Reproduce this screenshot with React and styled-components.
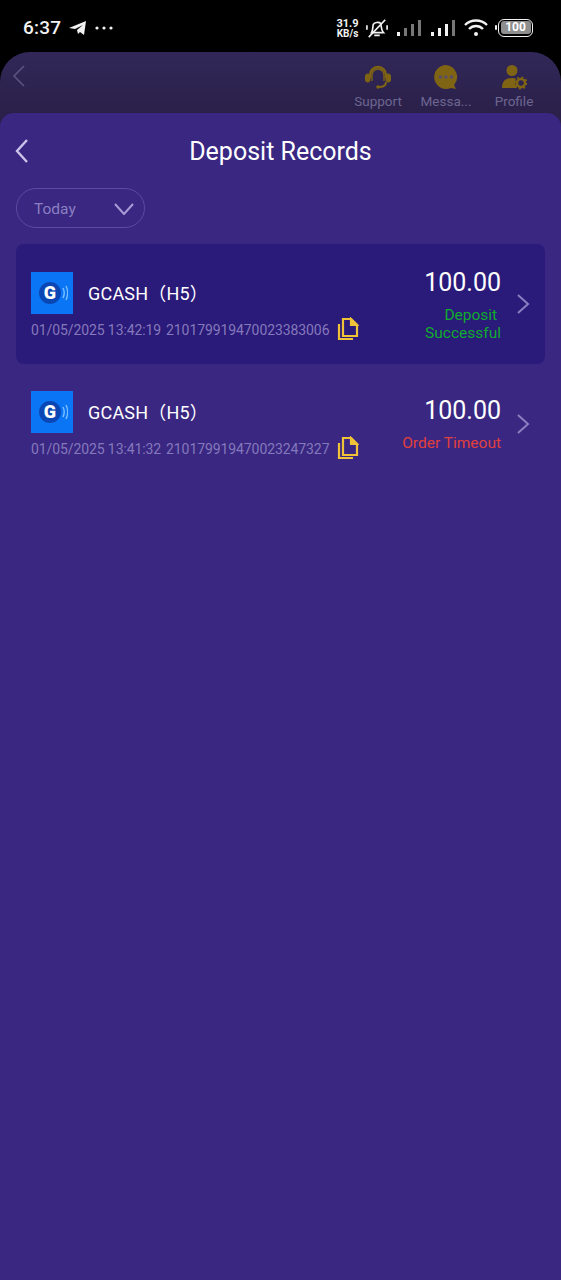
import React from 'react';
import styled, { createGlobalStyle } from 'styled-components';

const GlobalStyle = createGlobalStyle`
  html, body { margin: 0; padding: 0; background: #000; }
  body { font-family: Roboto, "Liberation Sans", sans-serif; }
  * { box-sizing: border-box; }
`;

const Phone = styled.div`
  width: 561px;
  height: 1280px;
  display: flex;
  flex-direction: column;
  background: #000;
  overflow: hidden;
`;

const StatusBar = styled.div`
  height: 52px;
  flex: none;
  display: flex;
  align-items: center;
  justify-content: space-between;
  padding: 3px 28px 0 23px;
  color: #f2f2f2;
`;

const StatusGroup = styled.div`
  display: flex;
  align-items: center;
  gap: ${p => p.$gap || 0}px;
`;

const Clock = styled.span`
  font-size: 19px;
  font-weight: 500;
  letter-spacing: 0.2px;
`;

const Speed = styled.div`
  display: flex;
  flex-direction: column;
  align-items: center;
  font-size: 10px;
  font-weight: 700;
  line-height: 9px;
  width: 23px;
  margin-right: -1px;
  span:first-child { font-size: 11px; line-height: 11px; }
`;

const Battery = styled.div`
  width: 35px;
  height: 18px;
  border: 1.5px solid #f2f2f2;
  border-radius: 6px;
  padding: 1.5px;
  display: flex;
  margin-left: 2px;
  position: relative;
  &::before {
    content: '';
    position: absolute;
    left: -4px;
    top: 5px;
    width: 2px;
    height: 5px;
    background: #f2f2f2;
    border-radius: 1px;
  }
`;

const BatteryFill = styled.div`
  flex: 1;
  background: #8e8e8e;
  border-radius: 3px;
  color: #fff;
  font-size: 12px;
  font-weight: 700;
  line-height: 12px;
  text-align: center;
`;

const DimPanel = styled.div`
  flex: 1;
  display: flex;
  flex-direction: column;
  background: linear-gradient(#312859, #2a2049 60px);
  border-radius: 30px 30px 0 0;
`;

const DimHeader = styled.div`
  height: 61px;
  flex: none;
  display: flex;
  justify-content: space-between;
  padding: 12px 0 0 12px;
`;

const DimNav = styled.div`
  display: flex;
  padding-right: 13px;
`;

const DimNavItem = styled.div`
  width: 68px;
  display: flex;
  flex-direction: column;
  align-items: center;
  color: #6d6691;
  font-size: 13.5px;
  line-height: 16px;
  svg { margin-bottom: 3px; }
`;

const Sheet = styled.main`
  flex: 1;
  display: flex;
  flex-direction: column;
  background: #392782;
  border-radius: 14px 14px 0 0;
`;

const TitleBar = styled.header`
  height: 75px;
  flex: none;
  display: flex;
  align-items: center;
  justify-content: center;
  position: relative;
  padding-top: 2px;
`;

const BackButton = styled.button`
  position: absolute;
  left: 13px;
  top: 25px;
  padding: 0;
  border: 0;
  background: none;
  display: flex;
`;

const Title = styled.h1`
  margin: 0;
  color: #fff;
  font-size: 25px;
  font-weight: 400;
`;

const Filter = styled.div`
  margin-left: 16px;
  width: 129px;
  height: 40px;
  flex: none;
  display: flex;
  align-items: center;
  justify-content: space-between;
  padding: 1px 10px 0 17px;
  border: 1px solid #5c4c9f;
  border-radius: 20px;
  color: #8b7fc0;
  font-size: 15.5px;
`;

const Records = styled.section`
  display: flex;
  flex-direction: column;
  margin: 16px 16px 0;
`;

const Record = styled.article`
  height: 120px;
  display: flex;
  align-items: center;
  position: relative;
  padding: 0 15px;
  border-radius: 8px;
  background: ${p => (p.$active ? '#2a1a79' : 'transparent')};
`;

const RecordMain = styled.div`
  flex: 1;
  display: flex;
  flex-direction: column;
  gap: 5px;
  padding-top: ${p => (p.$active ? 4 : 2)}px;
`;

const Channel = styled.div`
  display: flex;
  align-items: center;
  gap: 15px;
`;

const ChannelName = styled.span`
  margin-top: -2px;
  color: #fff;
  font-family: Roboto, "Noto Sans CJK SC", sans-serif;
  font-size: 18px;
  letter-spacing: 0.2px;
`;

const Logo = styled.div`
  width: 42px;
  height: 42px;
  background: #0a75f5;
  position: relative;
  display: flex;
  align-items: center;
  justify-content: center;
  padding-right: 4px;
`;

const LogoRing = styled.div`
  width: 22px;
  height: 22px;
  border-radius: 50%;
  background: #0b47b4;
  display: flex;
  align-items: center;
  justify-content: center;
  color: #fff;
  font-size: 18px;
  font-weight: 900;
  line-height: 1;
`;

const LogoWaves = styled.svg`
  position: absolute;
  right: 5px;
  top: 12px;
`;

const Meta = styled.div`
  display: flex;
  align-items: center;
  color: #8579bb;
  font-size: 14px;
  letter-spacing: -0.09px;
  white-space: nowrap;
`;

const MetaTime = styled.span`
  margin-right: 5px;
  letter-spacing: -0.1px;
`;

const CopyIcon = styled.svg`
  margin: -2px 0 0 8px;
  flex: none;
`;

const RecordSide = styled.div`
  width: 110px;
  margin-right: 29px;
  margin-top: ${p => (p.$active ? 1 : -1)}px;
  display: flex;
  flex-direction: column;
  align-items: flex-end;
  text-align: right;
`;

const Amount = styled.div`
  color: #fff;
  font-size: 25px;
  line-height: 30px;
  margin-bottom: 8px;
`;

const Status = styled.div`
  color: ${p => p.$color};
  font-size: 15.5px;
  line-height: 18px;
  white-space: pre-line;
`;

const Chevron = styled.svg`
  position: absolute;
  right: 14px;
  top: 50%;
  margin-top: -11px;
`;

const Arrow = () => (
  <Chevron width="15" height="22" viewBox="0 0 15 22" fill="none" stroke="#8b7fc0" strokeWidth="2">
    <path d="M2 2l10 9-10 9" />
  </Chevron>
);

const Copy = () => (
  <CopyIcon width="22" height="24" viewBox="0 0 22 24" fill="none" stroke="#f0c238" strokeWidth="2.2">
    <path d="M6 2h8l6 6v11H6z" />
    <path d="M14 2l6 6h-6z" fill="#f0c238" />
    <path d="M2 7v15h14" />
  </CopyIcon>
);

const records = [
  { time: '01/05/2025 13:42:19', id: '210179919470023383006', status: 'Deposit\u00a0\nSuccessful', color: '#10ac2e', active: true },
  { time: '01/05/2025 13:41:32', id: '210179919470023247327', status: 'Order Timeout', color: '#e0403c' },
];

export default function App() {
  return (
    <Phone>
      <GlobalStyle />
      <StatusBar>
        <StatusGroup $gap={8}>
          <Clock>6:37</Clock>
          <svg width="18" height="16" viewBox="0 0 18 16" fill="#f2f2f2">
            <path d="M0 8L17 1l-2 14-4-3-2 2-1-4 6-5-8 4z" />
          </svg>
          <svg width="18" height="4" viewBox="0 0 18 4" fill="#f2f2f2">
            <circle cx="2" cy="2" r="1.6" /><circle cx="9" cy="2" r="1.6" /><circle cx="16" cy="2" r="1.6" />
          </svg>
        </StatusGroup>
        <StatusGroup $gap={8}>
          <Speed><span>31.9</span><span>KB/s</span></Speed>
          <svg width="22" height="22" viewBox="0 0 24 22" fill="none" stroke="#f2f2f2" strokeWidth="1.8">
            <path d="M6 16c2-3 1-6 2-9 1-2 6-3 8-1 1 3 0 7 3 10z" />
            <path d="M9 19h6M3 21L21 2M1 8v5M23 8v5" />
          </svg>
          <svg width="26" height="18" viewBox="0 0 26 18">
            <rect x="1" y="13" width="3" height="4" fill="#f2f2f2" />
            <rect x="8" y="9" width="3" height="8" fill="#777" />
            <rect x="15" y="5" width="3" height="12" fill="#777" />
            <rect x="22" y="1" width="3" height="16" fill="#777" />
          </svg>
          <svg width="26" height="18" viewBox="0 0 26 18">
            <rect x="1" y="13" width="3" height="4" fill="#f2f2f2" />
            <rect x="8" y="9" width="3" height="8" fill="#f2f2f2" />
            <rect x="15" y="5" width="3" height="12" fill="#f2f2f2" />
            <rect x="22" y="1" width="3" height="16" fill="#777" />
          </svg>
          <svg width="24" height="18" viewBox="0 0 24 18" fill="none" stroke="#f2f2f2" strokeWidth="2.4">
            <path d="M1 6c6-6 16-6 22 0M5 10c4-4 10-4 14 0" />
            <circle cx="12" cy="15" r="2" fill="#f2f2f2" stroke="none" />
          </svg>
          <Battery><BatteryFill>100</BatteryFill></Battery>
        </StatusGroup>
      </StatusBar>
      <DimPanel>
        <DimHeader>
          <svg width="14" height="24" viewBox="0 0 14 24" fill="none" stroke="#5c5480" strokeWidth="1.6">
            <path d="M12 2L2 12l10 10" />
          </svg>
          <DimNav>
            <DimNavItem>
              <svg width="28" height="26" viewBox="0 0 28 26" fill="none" stroke="#7f6413" strokeWidth="2.4">
                <path d="M6 14V11a8 8 0 0 1 16 0v3" />
                <path d="M8 17V11a6 6 0 0 1 12 0v6" strokeWidth="1.4" />
                <rect x="1.5" y="10" width="4.5" height="8" rx="2" fill="#7f6413" strokeWidth="1" />
                <rect x="22" y="10" width="4.5" height="8" rx="2" fill="#7f6413" strokeWidth="1" />
                <path d="M22 18c0 4-3 5-7 5" strokeWidth="2" />
                <circle cx="14" cy="23" r="1.8" fill="#7f6413" stroke="none" />
              </svg>
              Support
            </DimNavItem>
            <DimNavItem>
              <svg width="26" height="26" viewBox="0 0 26 26">
                <path d="M13 1a12 12 0 1 0 5 23l5 1-2-4A12 12 0 0 0 13 1z" fill="#7f6413" />
                <circle cx="7.5" cy="13" r="1.8" fill="#5a4f66" />
                <circle cx="13" cy="13" r="1.8" fill="#5a4f66" />
                <circle cx="18.5" cy="13" r="1.8" fill="#5a4f66" />
              </svg>
              Messa...
            </DimNavItem>
            <DimNavItem>
              <svg width="26" height="26" viewBox="0 0 26 26" fill="#7f6413">
                <circle cx="11" cy="6.5" r="5.5" />
                <path d="M1 24c0-7 4-10 10-10 2 0 3 .3 4 1-1 3-1 6 1 9z" />
                <circle cx="20" cy="19" r="4" fill="none" stroke="#7f6413" strokeWidth="2.6" />
                <circle cx="20" cy="19" r="5.8" fill="none" stroke="#7f6413" strokeWidth="1.6" strokeDasharray="2 2.5" />
              </svg>
              Profile
            </DimNavItem>
          </DimNav>
        </DimHeader>
        <Sheet>
          <TitleBar>
            <BackButton aria-label="Back">
              <svg width="20" height="26" viewBox="0 0 20 26" fill="none" stroke="#cbc4ea" strokeWidth="2.4">
                <path d="M14 2L4 13l10 11" />
              </svg>
            </BackButton>
            <Title>Deposit Records</Title>
          </TitleBar>
          <Filter>
            Today
            <svg width="20" height="12" viewBox="0 0 20 12" fill="none" stroke="#a79dd6" strokeWidth="2">
              <path d="M1 1l9 10 9-10" />
            </svg>
          </Filter>
          <Records>
            {records.map(r => (
              <Record key={r.id} $active={r.active}>
                <RecordMain $active={r.active}>
                  <Channel>
                    <Logo>
                      <LogoRing>G</LogoRing>
                      <LogoWaves width="6" height="18" viewBox="0 0 6 18" fill="none" stroke="#7ec0ff" strokeWidth="1.4">
                        <path d="M1 4c1.5 3 1.5 7 0 10M4 2c2 4 2 10 0 14" />
                      </LogoWaves>
                    </Logo>
                    <ChannelName>GCASH（H5）</ChannelName>
                  </Channel>
                  <Meta>
                    <MetaTime>{r.time}</MetaTime>
                    {r.id}
                    <Copy />
                  </Meta>
                </RecordMain>
                <RecordSide $active={r.active}>
                  <Amount>100.00</Amount>
                  <Status $color={r.color}>{r.status}</Status>
                </RecordSide>
                <Arrow />
              </Record>
            ))}
          </Records>
        </Sheet>
      </DimPanel>
    </Phone>
  );
}
